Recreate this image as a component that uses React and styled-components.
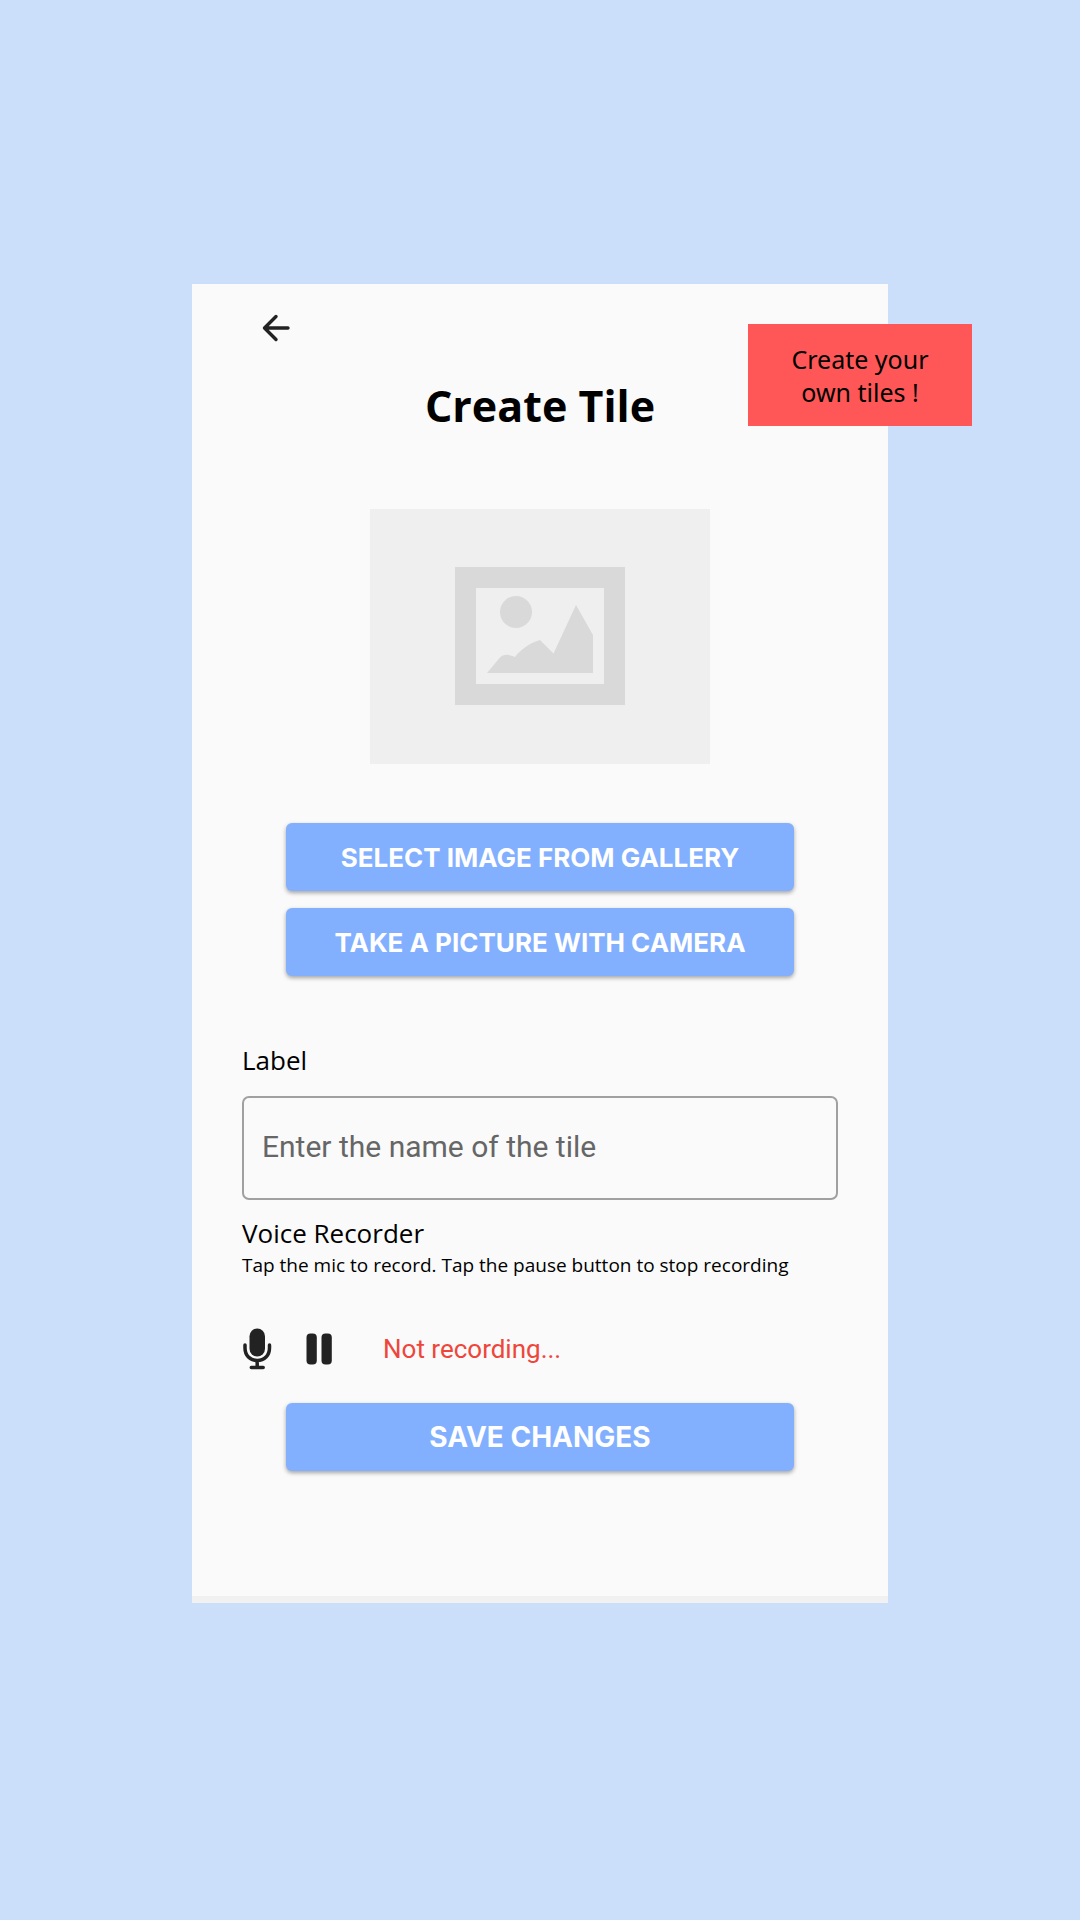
import React, { useState } from "react";
import styled, { createGlobalStyle } from "styled-components";

const GlobalStyle = createGlobalStyle`
  *, *::before, *::after { box-sizing: border-box; }
  body {
    margin: 0;
    background: #cbdffa;
    font-family: "Open Sans", "Noto Sans", sans-serif;
    color: #000;
  }
`;

const Page = styled.div`
  min-height: 100vh;
  padding: 284px 108px 120px;
  display: flex;
  flex-direction: column;
  align-items: center;
`;

const Screen = styled.main`
  position: relative;
  width: 100%;
  max-width: 696px;
  padding: 22px 50px 125px;
  background: #fafafa;
  border-bottom: 7px solid #f1f1f1;
  display: flex;
  flex-direction: column;
`;

const Note = styled.aside`
  position: absolute;
  top: 40px;
  right: -84px;
  width: 224px;
  padding: 19px 36px 17px;
  background: #ff5757;
  font-family: "Noto Sans", sans-serif;
  font-size: 25px;
  line-height: 33px;
  text-align: center;
`;

const IconButton = styled.button`
  display: flex;
  align-items: center;
  justify-content: center;
  width: ${({ $width }) => $width}px;
  height: 44px;
  padding: 0;
  border: 0;
  background: none;
  color: #222;
  cursor: pointer;
`;

const TopBar = styled.header`
  display: flex;
  padding-left: 12px;
`;

const Title = styled.h1`
  margin: 26px 0 0;
  font-size: 43px;
  line-height: 60px;
  font-weight: 700;
  text-align: center;
`;

const Preview = styled.div`
  width: 100%;
  max-width: 340px;
  margin: 73px auto 0;
  background: #efefef;
  svg { display: block; width: 100%; }
`;

const Actions = styled.div`
  display: flex;
  flex-direction: column;
  align-items: center;
  gap: 17px;
  margin-top: ${({ $top }) => $top}px;
`;

const ActionButton = styled.button`
  width: 100%;
  max-width: 508px;
  height: 68px;
  padding: 0 16px;
  border: 0;
  border-radius: 6px;
  background: #82b0ff;
  box-shadow: 0 2px 4px rgba(0, 0, 0, 0.35);
  color: #fff;
  font-family: Inter, sans-serif;
  font-size: ${({ $size }) => $size}px;
  font-weight: 700;
  text-transform: uppercase;
  cursor: pointer;
`;

const Field = styled.div`
  display: flex;
  flex-direction: column;
  gap: 18px;
  margin-top: 66px;
`;

const FieldLabel = styled.label`
  font-size: 26px;
  line-height: 36px;
`;

const TextInput = styled.input`
  width: 100%;
  height: 104px;
  padding: 0 18px 4px;
  border: 2px solid #a0a0a0;
  border-radius: 7px;
  background: transparent;
  color: #222;
  font-family: Roboto, sans-serif;
  font-size: 30px;
  &::placeholder { color: #666; opacity: 1; }
`;

const Recorder = styled.section`
  margin-top: 15px;
`;

const RecorderTitle = styled.h2`
  margin: 0;
  font-size: 26px;
  line-height: 36px;
  font-weight: 400;
`;

const Hint = styled.p`
  margin: 0;
  font-size: 19px;
  line-height: 28px;
`;

const Controls = styled.div`
  display: flex;
  align-items: center;
  margin-top: 48px;
`;

const Transport = styled.div`
  display: flex;
  gap: 34px;
  margin-right: 51px;
`;

const Status = styled.span`
  color: #ee463a;
  font-family: Roboto, sans-serif;
  font-size: 26px;
  line-height: 36px;
`;

const ArrowIcon = () => (
  <svg width="28" height="28" viewBox="0 0 28 28" fill="none" stroke="currentColor" strokeWidth="3.4" strokeLinecap="round" strokeLinejoin="round" aria-hidden="true">
    <path d="M26 14H2.5M14 2.5L2.5 14L14 25.5" />
  </svg>
);

const MicIcon = () => (
  <svg width="30" height="42" viewBox="0 0 30 42" fill="none" aria-hidden="true">
    <rect x="7.5" y="0.5" width="15.5" height="28" rx="7.75" fill="currentColor" />
    <path d="M3 17V20C3 27.5 8 32.5 15.2 32.5S27.5 27.5 27.5 20V17M15.2 32.5V39.5M9.3 39.5H21.2" stroke="currentColor" strokeWidth="3.5" strokeLinecap="round" />
  </svg>
);

const PauseIcon = () => (
  <svg width="26" height="32" viewBox="0 0 26 32" fill="currentColor" aria-hidden="true">
    <rect x="0.5" y="0.5" width="10.3" height="31" rx="4" />
    <rect x="15.5" y="0.5" width="10.3" height="31" rx="4" />
  </svg>
);

const PlaceholderPicture = () => (
  <svg viewBox="0 0 340 255" fill="#d9d9d9" role="img" aria-label="No image selected">
    <path fillRule="evenodd" d="M85 58H255V196H85ZM106 79V175H234V79Z" />
    <circle cx="146" cy="103" r="16" />
    <path d="M117 164L129.500 149C133 145 139 145 145 148C151 140 160 134 170 131L183.500 144.500L206 96L223 126V164Z" />
  </svg>
);

export default function App() {
  const [name, setName] = useState("");
  const [recording, setRecording] = useState(false);

  return (
    <>
      <GlobalStyle />
      <Page>
        <Screen>
          <Note>Create your own tiles !</Note>
          <TopBar>
            <IconButton type="button" $width={44} aria-label="Back"><ArrowIcon /></IconButton>
          </TopBar>
          <Title>Create Tile</Title>
          <Preview><PlaceholderPicture /></Preview>
          <Actions $top={59}>
            <ActionButton type="button" $size={26}>Select image from gallery</ActionButton>
            <ActionButton type="button" $size={26}>Take a picture with camera</ActionButton>
          </Actions>
          <Field>
            <FieldLabel htmlFor="tile-name">Label</FieldLabel>
            <TextInput
              id="tile-name"
              type="text"
              placeholder="Enter the name of the tile"
              value={name}
              onChange={(event) => setName(event.target.value)}
            />
          </Field>
          <Recorder>
            <RecorderTitle>Voice Recorder</RecorderTitle>
            <Hint>Tap the mic to record. Tap the pause button to stop recording</Hint>
            <Controls>
              <Transport>
                <IconButton type="button" $width={30} aria-label="Record" onClick={() => setRecording(true)}><MicIcon /></IconButton>
                <IconButton type="button" $width={26} aria-label="Pause" onClick={() => setRecording(false)}><PauseIcon /></IconButton>
              </Transport>
              <Status role="status">{recording ? "Recording..." : "Not recording..."}</Status>
            </Controls>
          </Recorder>
          <Actions $top={32}>
            <ActionButton type="button" $size={28}>Save changes</ActionButton>
          </Actions>
        </Screen>
      </Page>
    </>
  );
}
